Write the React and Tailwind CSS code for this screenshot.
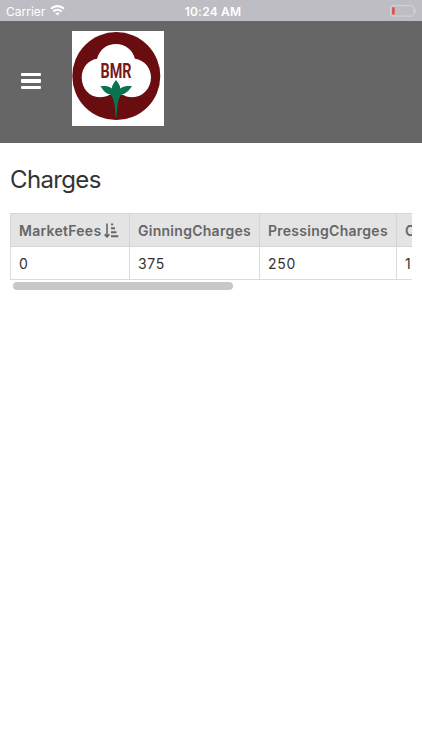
import React from 'react';
import clsx from 'clsx';

const columns = [
    { key: 'MarketFees', width: 'w-[119px]', sorted: true },
    { key: 'GinningCharges', width: 'w-[130px]' },
    { key: 'PressingCharges', width: 'w-[137px]' },
    { key: 'CartageCharges', width: 'w-[130px]' },
];

const rows = [
    { MarketFees: 0, GinningCharges: 375, PressingCharges: 250, CartageCharges: 100 },
];

const SortIcon = () => (
    <svg className="w-[15px] h-[15px] shrink-0" viewBox="0 0 15 15" fill="none" stroke="currentColor">
        <path d="M3 0.5V13.5M0.6 11.4L3 13.8L5.4 11.4" strokeWidth="1.6" />
        <path d="M7 1.4H9.2M7 5.3H11M7 9.2H12.4M7 13.3H14.3" strokeWidth="1.9" />
    </svg>
);

const StatusBar = () => (
    <div className="h-[21px] bg-[#bebdc4] text-white grid grid-cols-3 items-center pl-[6px] pr-[5px] pt-[2px]">
        <div className="flex items-center gap-[5px] text-[12px]">
            <span>Carrier</span>
            <svg className="w-[15px] h-[11px] -mt-[2px]" viewBox="0 0 15 11" fill="none" stroke="currentColor">
                <path d="M1 3.8C4.7 0.3 10.3 0.3 14 3.8" strokeWidth="2.2" />
                <path d="M3.4 6.4C5.8 4.2 9.2 4.2 11.6 6.4" strokeWidth="2" />
                <path d="M7.5 10.6L5.2 8.3C6.5 7.1 8.5 7.1 9.8 8.3Z" fill="currentColor" stroke="none" />
            </svg>
        </div>
        <div className="text-center text-[12px] font-semibold tracking-[0.2px] pl-[3px]">10:24 AM</div>
        <svg className="w-[27px] h-[12px] justify-self-end -mt-[2px]" viewBox="0 0 27 12">
            <rect x="0.7" y="0.7" width="23.2" height="10.4" rx="2.3" fill="none" stroke="#d6d5da" />
            <rect x="2.2" y="2.2" width="2.4" height="7.4" rx="0.6" fill="#ef4135" />
            <path d="M25 4C26.4 4.6 26.4 7.2 25 7.8Z" fill="#d6d5da" />
        </svg>
    </div>
);

const Logo = () => (
    <svg className="w-[92px] h-[95px] bg-white" viewBox="0 -0.6 92 95">
        <circle cx="44.3" cy="44.5" r="44" fill="#690d10" />
        <path
            d="M25 27.2C28 17.5 35 12.5 44 12.5C53 12.5 60.5 18 63 27.2C72.5 28.5 79 36.5 79 46C79 57.5 70 66 60 65.7C56 65.6 53 64.6 50 63L38 63C35 64.8 32 65.6 28 65.7C18 66 9.7 57.5 9.7 46C9.7 36.5 16 28.5 25 27.2Z"
            fill="#fff"
        />
        <path
            d="M44 48.5C47 52 48.2 54.5 48.3 57C51.5 54.5 55.5 54.2 60 54.5C57 59 54.5 62 49.5 63C46.5 66 45.2 73 44.6 85.5H43.6C43.2 73 41.5 66 38.5 63C33.5 62 31 59 28.5 54.5C33 54.2 37 54.5 39.8 57C40 54.5 41 52 44 48.5Z"
            fill="#08734f"
        />
        <text
            x="44"
            y="46.2"
            textAnchor="middle"
            textLength="31"
            lengthAdjust="spacingAndGlyphs"
            fill="#741a1b"
            className="font-['Roboto',sans-serif] text-[21px] font-bold"
        >
            BMR
        </text>
    </svg>
);

const Header = () => (
    <div className="h-[122px] bg-[#666] flex items-start pl-[21px] pt-[10px]">
        <button className="w-[19.5px] mt-[42px] mr-[31.5px] flex flex-col gap-[3px]" aria-label="Menu">
            <span className="h-[3.4px] w-full rounded-[1px] bg-white" />
            <span className="h-[3.4px] w-full rounded-[1px] bg-white" />
            <span className="h-[3.4px] w-full rounded-[1px] bg-white" />
        </button>
        <Logo />
    </div>
);

const App = () => {
    return (
        <div className="min-h-screen bg-white font-['Inter',sans-serif] text-[#333] overflow-hidden">
            <StatusBar />
            <Header />

            <div className="px-[10px] pt-[21px]">
                <h1 className="text-[24px] leading-[32px] tracking-[-0.65px]">Charges</h1>

                {/* Charges table, wider than the screen */}
                <div className="mt-[17px] overflow-hidden">
                    <table className="table-fixed w-[517px] border-collapse border border-[#dcdcdc] text-left">
                        <thead className="bg-[#e4e4e4] text-[#666] text-[14px] tracking-[0.27px]">
                            <tr className="h-[33px]">
                                {columns.map(c => (
                                    <th key={c.key} className={clsx('border border-[#d6d6d6] px-2 py-0 font-semibold', c.width)}>
                                        <div className="flex items-center gap-[3px]">
                                            <span>{c.key}</span>
                                            {c.sorted && <SortIcon />}
                                        </div>
                                    </th>
                                ))}
                            </tr>
                        </thead>
                        <tbody className="text-[14px] tracking-[0.7px]">
                            {rows.map((row, i) => (
                                <tr key={i} className="h-[33px]">
                                    {columns.map(c => (
                                        <td key={c.key} className="border border-[#dcdcdc] px-2 py-0">{row[c.key]}</td>
                                    ))}
                                </tr>
                            ))}
                        </tbody>
                    </table>

                    {/* Scroll indicator */}
                    <div className="mt-[2px] ml-[2.5px] h-[8px] w-[220px] rounded-full bg-[#c8c8c8]" />
                </div>
            </div>
        </div>
    );
};

export default App;
